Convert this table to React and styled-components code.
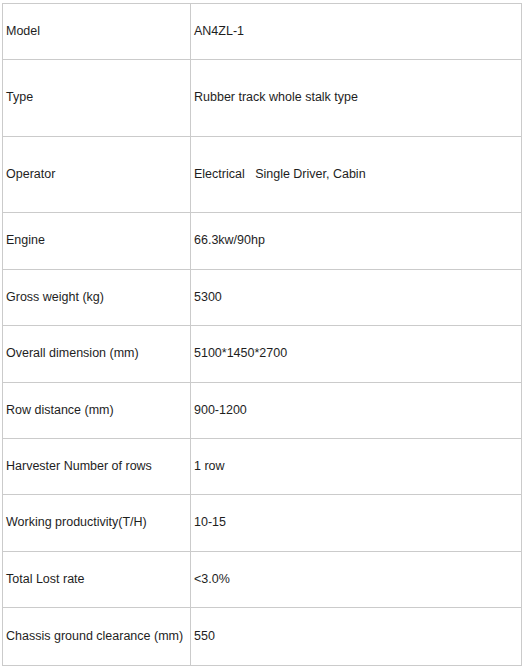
import React from "react";
import styled, { createGlobalStyle } from "styled-components";

const Global = createGlobalStyle`
  html, body { margin: 0; padding: 0; background: #fff; }
  body { font-family: "Liberation Sans", Arial, sans-serif; }
`;

const Page = styled.div`
  padding: 3px 0 0 2px;
`;

const Grid = styled.div`
  display: grid;
  grid-template-columns: 188px 331px;
  width: 520px;
  box-sizing: border-box;
  border-top: 1px solid #cbcbcb;
  border-left: 1px solid #cbcbcb;
`;

const Cell = styled.div`
  box-sizing: border-box;
  height: ${(p) => p.$h}px;
  display: flex;
  align-items: center;
  padding: 0 3px 2px;
  border-right: 1px solid #cbcbcb;
  border-bottom: 1px solid #cbcbcb;
  font-size: 12.5px;
  color: #1e1e1e;
  white-space: pre;
`;

const rows = [
  ["Model", "AN4ZL-1", 56],
  ["Type", "Rubber track whole stalk type", 77],
  ["Operator", "Electrical   Single Driver, Cabin", 76],
  ["Engine", "66.3kw/90hp", 57],
  ["Gross weight (kg)", "5300", 56],
  ["Overall dimension (mm)", "5100*1450*2700", 57],
  ["Row distance (mm)", "900-1200", 56],
  ["Harvester Number of rows", "1 row", 56],
  ["Working productivity(T/H)", "10-15", 57],
  ["Total Lost rate", "<3.0%", 56],
  ["Chassis ground clearance (mm)", "550", 58],
];

export default function App() {
  return (
    <Page>
      <Global />
      <Grid>
        {rows.map(([k, v, h]) => (
          <React.Fragment key={k}>
            <Cell $h={h}>{k}</Cell>
            <Cell $h={h}>{v}</Cell>
          </React.Fragment>
        ))}
      </Grid>
    </Page>
  );
}
